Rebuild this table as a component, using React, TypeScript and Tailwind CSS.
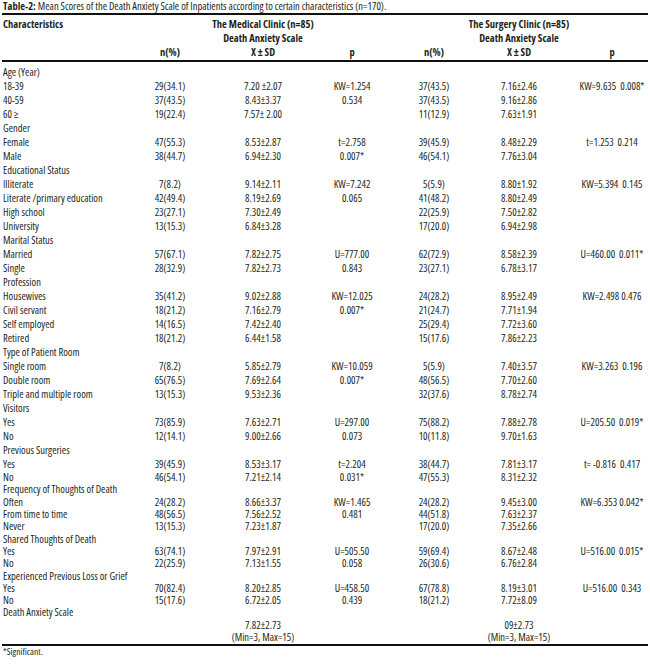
import React from "react";

type Row = [string, string, string, string, string, string, string];

interface Group {
  label: string;
  rows: Row[];
}

const groups: Group[] = [
  {
    label: "Age (Year)",
    rows: [
      ["18-39", "29(34.1)", "7.20 ±2.07", "KW=1.254", "37(43.5)", "7.16±2.46", "KW=9.635  0.008*"],
      ["40-59", "37(43.5)", "8.43±3.37", "0.534", "37(43.5)", "9.16±2.86", ""],
      ["60 ≥", "19(22.4)", "7.57± 2.00", "", "11(12.9)", "7.63±1.91", ""],
    ],
  },
  {
    label: "Gender",
    rows: [
      ["Female", "47(55.3)", "8.53±2.87", "t=2.758", "39(45.9)", "8.48±2.29", "t=1.253  0.214"],
      ["Male", "38(44.7)", "6.94±2.30", "0.007*", "46(54.1)", "7.76±3.04", ""],
    ],
  },
  {
    label: "Educational Status",
    rows: [
      ["Illiterate", "7(8.2)", "9.14±2.11", "KW=7.242", "5(5.9)", "8.80±1.92", "KW=5.394  0.145"],
      ["Literate /primary education", "42(49.4)", "8.19±2.69", "0.065", "41(48.2)", "8.80±2.49", ""],
      ["High school", "23(27.1)", "7.30±2.49", "", "22(25.9)", "7.50±2.82", ""],
      ["University", "13(15.3)", "6.84±3.28", "", "17(20.0)", "6.94±2.98", ""],
    ],
  },
  {
    label: "Marital Status",
    rows: [
      ["Married", "57(67.1)", "7.82±2.75", "U=777.00", "62(72.9)", "8.58±2.39", "U=460.00  0.011*"],
      ["Single", "28(32.9)", "7.82±2.73", "0.843", "23(27.1)", "6.78±3.17", ""],
    ],
  },
  {
    label: "Profession",
    rows: [
      ["Housewives", "35(41.2)", "9.02±2.88", "KW=12.025", "24(28.2)", "8.95±2.49", "KW=2.498 0.476"],
      ["Civil servant", "18(21.2)", "7.16±2.79", "0.007*", "21(24.7)", "7.71±1.94", ""],
      ["Self employed", "14(16.5)", "7.42±2.40", "", "25(29.4)", "7.72±3.60", ""],
      ["Retired", "18(21.2)", "6.44±1.58", "", "15(17.6)", "7.86±2.23", ""],
    ],
  },
  {
    label: "Type of Patient Room",
    rows: [
      ["Single room", "7(8.2)", "5.85±2.79", "KW=10.059", "5(5.9)", "7.40±3.57", "KW=3.263  0.196"],
      ["Double room", "65(76.5)", "7.69±2.64", "0.007*", "48(56.5)", "7.70±2.60", ""],
      ["Triple and multiple room", "13(15.3)", "9.53±2.36", "", "32(37.6)", "8.78±2.74", ""],
    ],
  },
  {
    label: "Visitors",
    rows: [
      ["Yes", "73(85.9)", "7.63±2.71", "U=297.00", "75(88.2)", "7.88±2.78", "U=205.50  0.019*"],
      ["No", "12(14.1)", "9.00±2.66", "0.073", "10(11.8)", "9.70±1.63", ""],
    ],
  },
  {
    label: "Previous Surgeries",
    rows: [
      ["Yes", "39(45.9)", "8.53±3.17", "t=2.204", "38(44.7)", "7.81±3.17", "t= -0.816  0.417"],
      ["No", "46(54.1)", "7.21±2.14", "0.031*", "47(55.3)", "8.31±2.32", ""],
    ],
  },
  {
    label: "Frequency of Thoughts of Death",
    rows: [
      ["Often", "24(28.2)", "8.66±3.37", "KW=1.465", "24(28.2)", "9.45±3.00", "KW=6.353 0.042*"],
      ["From time to time", "48(56.5)", "7.56±2.52", "0.481", "44(51.8)", "7.63±2.37", ""],
      ["Never", "13(15.3)", "7.23±1.87", "", "17(20.0)", "7.35±2.66", ""],
    ],
  },
  {
    label: "Shared Thoughts of Death",
    rows: [
      ["Yes", "63(74.1)", "7.97±2.91", "U=505.50", "59(69.4)", "8.67±2.48", "U=516.00  0.015*"],
      ["No", "22(25.9)", "7.13±1.55", "0.058", "26(30.6)", "6.76±2.84", ""],
    ],
  },
  {
    label: "Experienced Previous Loss or Grief",
    rows: [
      ["Yes", "70(82.4)", "8.20±2.85", "U=458.50", "67(78.8)", "8.19±3.01", "U=516.00  0.343"],
      ["No", "15(17.6)", "6.72±2.05", "0.439", "18(21.2)", "7.72±8.09", ""],
    ],
  },
  {
    label: "Death Anxiety Scale",
    rows: [
      ["", "", "7.82±2.73", "", "", "09±2.73", ""],
      ["", "", "(Min=3, Max=15)", "", "", "(Min=3, Max=15)", ""],
    ],
  },
];

// flatten: each group label gets a line of its own
const lines: Row[] = [];
groups.forEach((g) => {
  lines.push([g.label, "", "", "", "", "", ""]);
  g.rows.forEach((r) => lines.push(r));
});

const Cell = ({ text, first }: { text: string; first?: boolean }) => (
  <div className={first ? "flex justify-start pl-px whitespace-pre" : "flex justify-center whitespace-pre"}>
    <span>{text}</span>
  </div>
);

export default function App() {
  return (
    <div className="w-[650px] h-[664px] bg-white px-[2px] text-[10.5px] text-[#231f20] font-['Open_Sans',sans-serif] font-stretch-condensed">
      <p className="h-[12px] leading-[12px] pl-px whitespace-nowrap">
        <span className="font-bold">Table-2:</span> Mean Scores of the Death Anxiety Scale of Inpatients
        according to certain characteristics (n=170).
      </p>

      <div className="mt-[1px] border-t-2 border-[#111]" />

      {/* header */}
      <div className="mt-[2px] grid grid-cols-[108px_120px_66px_112px_52px_118px_68px] auto-rows-[14px] items-center font-bold leading-[14px]">
        <Cell text="Characteristics" first />
        <div />
        <Cell text="The Medical Clinic (n=85)" />
        <div />
        <div />
        <Cell text="The Surgery Clinic (n=85)" />
        <div />

        <div />
        <div />
        <Cell text="Death Anxiety Scale" />
        <div />
        <div />
        <Cell text="Death Anxiety Scale" />
        <div />

        <div />
        <Cell text="n(%)" />
        <Cell text="X ± SD" />
        <Cell text="p" />
        <Cell text="n(%)" />
        <Cell text="X ± SD" />
        <Cell text="p" />
      </div>

      <div className="mt-[1px] border-t-2 border-[#111]" />

      {/* body */}
      <div className="mt-[3px] flex flex-col">
        {lines.map((cells, i) => (
          <div
            key={i}
            className={`grid grid-cols-[108px_120px_66px_112px_52px_118px_68px] items-center ${
              i < 29 ? "h-[14px] leading-[14px]" : "h-[12.3px] leading-[12px]"
            }`}
          >
            {cells.map((c, j) => (
              <Cell key={j} text={c} first={j === 0} />
            ))}
          </div>
        ))}
      </div>

      <div className="mt-[1px] border-t-2 border-[#111]" />

      <p className="h-[12px] leading-[12px] pl-px text-[9.5px]">*Significant.</p>
    </div>
  );
}
